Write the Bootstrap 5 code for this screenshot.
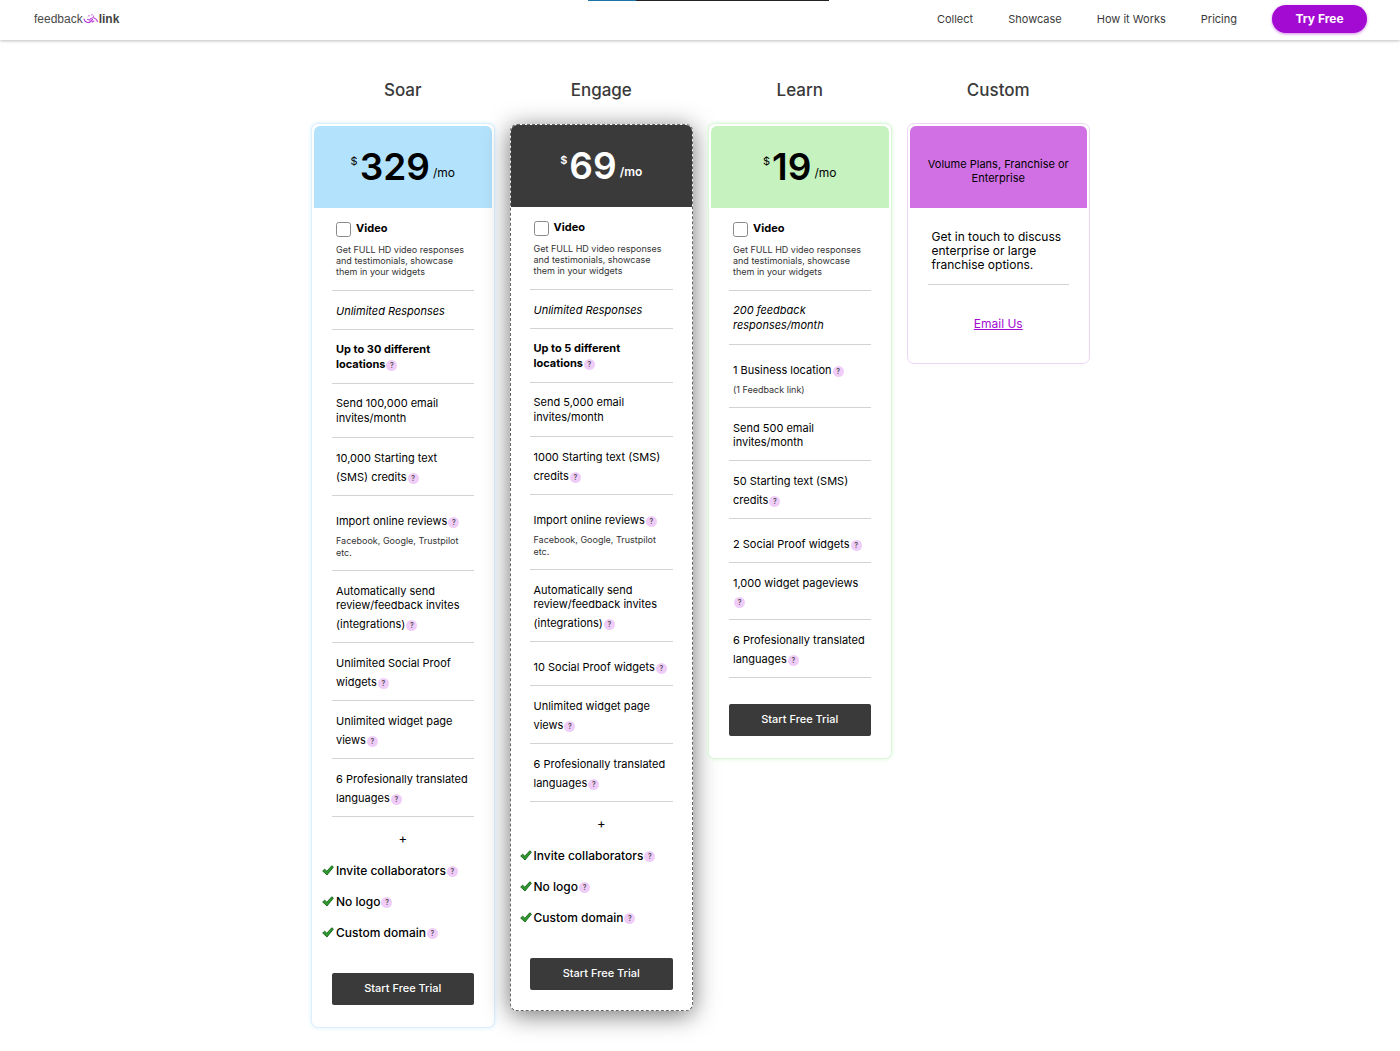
<!DOCTYPE html>
<html lang="en">
<head>
<meta charset="utf-8">
<meta name="viewport" content="width=device-width, initial-scale=1">
<title>Feedback Link - Pricing</title>
<link href="https://cdn.jsdelivr.net/npm/bootstrap@5.3.0/dist/css/bootstrap.min.css" rel="stylesheet">
<style>
  body { font-family: Inter, "Open Sans", sans-serif; font-size: 11px; line-height: 14px; color: #000; background: #fff; }
  .topbar { height: 40px; padding: 0 33px 2px 34px; background: #fff; box-shadow: 0 1px 3px rgba(0,0,0,.25); }
  .progress-strip { top: 0; left: 42%; width: 241px; height: 1px; background: #222; }
  .progress-strip span { width: 20%; height: 1px; background: #1d74a8; }
  .brand { font: 12px/16px "Liberation Sans", Arial, sans-serif; color: #4a4a4a; text-decoration: none; }
  .brand b { color: #444; }
  .top-links { gap: 35px; }
  .top-links a { color: #3a3a3a; text-decoration: none; font-size: 11px; }
  .btn-try { width: 95px; height: 28px; padding: 0; border: 0; border-radius: 14px; background: #a30ad2; color: #fff; font-size: 12px; font-weight: 700; line-height: 28px; box-shadow: 0 1px 3px rgba(163,10,210,.5); }
  .btn-try:hover { background: #8a08b3; color: #fff; }
  .plans { max-width: 780px; gap: 15px; margin: 0 auto; padding: 40px 0 20px 1px; }
  .plan { flex: 1 1 0; min-width: 0; }
  .plan h2 { font-size: 17px; line-height: 20px; font-weight: 500; color: #3a3a3a; text-align: center; margin: 0 0 23px; }
  .plan .card { padding: 2px; border-radius: 7px; --edge: #d9f0fe; border: 1px solid var(--edge); box-shadow: 0 0 4px var(--edge); }
  .plan-head { height: 82px; border-radius: 6px 6px 0 0; }
  .soar .plan-head { background: #b3e2fc; }
  .learn .card { --edge: #daf7d8; }
  .learn .plan-head { background: #c5f2bf; }
  .custom .card { --edge: #eed5f5; box-shadow: none; }
  .custom .plan-head { background: #d070e4; }
  .plan.engage .card { margin-top: 24px; padding: 0; border: 1px dashed #666; box-shadow: 0 4px 25px rgba(0,0,0,.55); }
  .plan.engage h2 { margin-bottom: 0; }
  .engage .plan-head { background: #3a3a3a; color: #fff; font-weight: 600; }
  .plan-head .amount { font-size: 37px; line-height: 40px; font-weight: 600; margin: 0 3px 0 2px; }
  .plan-head .cur { align-self: flex-start; margin-top: 7px; }
  .plan-head .per { align-self: flex-end; margin-bottom: 7px; font-size: 12px; }
  .plan-body { padding: 0 18px 20px; }
  .engage .plan-body { padding: 0 19px 20px; }
  .feat { padding: 13px 0 11px 4px; border-bottom: 1px solid #d3d3d3; white-space: nowrap; }
  .feat.roomy { padding-top: 12px; line-height: 15px; }
  .feat-video { height: 83px; }
  .feat-video label { font-size: 11px; font-weight: 700; }
  .feat-video input { width: 15px; height: 15px; margin: 1px 5px 0 0; border: 1px solid #8a8a8a; border-radius: 1px; }
  .note { font-size: 9px; line-height: 11px; color: #333; }
  .feat-video .note { margin-top: 7px; }
  .feat > .sub { margin-top: 7px; line-height: 12px; }
  .line-tip { display: flex; align-items: center; padding-top: 5px; }
  .line-tip.snug { padding-top: 0; }
  .tip { display: inline-flex; align-items: center; justify-content: center; width: 11px; height: 11px; margin: 2px 0 0 1px; padding: 0; border: 0; border-radius: 50%; background: #f0cdf9; color: #444; font-size: 7px; line-height: 11px; font-weight: 500; }
  .plus { margin: 14px 0 10px; font-size: 13px; text-align: center; }
  .extras { margin: 0 0 25px -10px; }
  .extras li { height: 31px; font-size: 12px; font-weight: 500; white-space: nowrap; }
  .extras svg { width: 12px; height: 11px; margin-right: 2px; }
  .btn-trial { height: 32px; padding: 0 0 2px; border: 0; border-radius: 2px; background: #3a3a3a; color: #fff; font-size: 11px; font-weight: 500; line-height: 14px; }
  .btn-trial:hover { background: #222; color: #fff; }
  .learn .btn-trial { margin-top: 26px; }
  .talk { padding: 22px 0 12px 4px; border-bottom: 1px solid #d3d3d3; font-size: 12px; }
  .mail { padding: 32px 0 10px; font-size: 12px; text-align: center; }
  .mail a { color: #a30ad2; }
</style>
</head>
<body>
<svg class="d-none" xmlns="http://www.w3.org/2000/svg">
  <symbol id="tick" viewBox="0 0 12 11"><path d="M.7 6 2.7 4.2 4.8 6.2 9.8.8 11.4 2.1 5 10Z" fill="#2f9a2c" stroke="#14601a" stroke-width=".9" stroke-linejoin="round"/></symbol>
</svg>

<header class="topbar d-flex align-items-center justify-content-between position-relative">
  <div class="progress-strip position-absolute"><span class="d-block"></span></div>
  <a class="brand d-flex align-items-center" href="#">feedback<svg width="16" height="12" viewBox="0 0 16 12" fill="none" stroke="#b53ad6" stroke-width="1.100" stroke-linecap="round"><path d="M1 6C2 9.500 5.500 10.500 7.500 8.500L9.500 6.500M6.500 7C8.500 3.500 12.500 4 14.600 8.500M4.500 6.500 6.500 7M9 9 11 8"/><path d="M6 2.500v.5M9 1.500v.5M10.500 3v.2"/></svg><b>link</b></a>
  <nav class="top-links d-flex align-items-center" aria-label="Main">
    <a href="#">Collect</a><a href="#">Showcase</a><a href="#">How it Works</a><a href="#">Pricing</a>
    <button type="button" class="btn btn-try">Try Free</button>
  </nav>
</header>

<main class="plans d-flex align-items-start">
  <section class="plan soar">
    <h2>Soar</h2>
    <div class="card">
      <div class="plan-head d-flex align-items-center justify-content-center"><div class="d-flex align-items-baseline"><span class="cur">$</span><span class="amount">329</span><span class="per">/mo</span></div></div>
      <div class="plan-body">
        <div class="feat feat-video">
          <div class="d-flex"><input class="form-check-input" type="checkbox" id="v1"><label for="v1">Video</label></div>
          <div class="note">Get FULL HD video responses<br>and testimonials, showcase<br>them in your widgets</div>
        </div>
        <div class="feat"><em>Unlimited Responses</em></div>
        <div class="feat roomy fw-bold">Up to 30 different<div class="line-tip snug">locations<button type="button" class="tip">?</button></div></div>
        <div class="feat roomy">Send 100,000 email<br>invites/month</div>
        <div class="feat">10,000 Starting text<div class="line-tip">(SMS) credits<button type="button" class="tip">?</button></div></div>
        <div class="feat"><div class="line-tip">Import online reviews<button type="button" class="tip">?</button></div><div class="note sub">Facebook, Google, Trustpilot<br>etc.</div></div>
        <div class="feat">Automatically send<br>review/feedback invites<div class="line-tip">(integrations)<button type="button" class="tip">?</button></div></div>
        <div class="feat">Unlimited Social Proof<div class="line-tip">widgets<button type="button" class="tip">?</button></div></div>
        <div class="feat">Unlimited widget page<div class="line-tip">views<button type="button" class="tip">?</button></div></div>
        <div class="feat">6 Profesionally translated<div class="line-tip">languages<button type="button" class="tip">?</button></div></div>
        <p class="plus">+</p>
        <ul class="extras list-unstyled">
          <li class="d-flex align-items-center"><svg><use href="#tick"/></svg>Invite collaborators<button type="button" class="tip">?</button></li>
          <li class="d-flex align-items-center"><svg><use href="#tick"/></svg>No logo<button type="button" class="tip">?</button></li>
          <li class="d-flex align-items-center"><svg><use href="#tick"/></svg>Custom domain<button type="button" class="tip">?</button></li>
        </ul>
        <button type="button" class="btn btn-trial w-100">Start Free Trial</button>
      </div>
    </div>
  </section>

  <section class="plan engage">
    <h2>Engage</h2>
    <div class="card">
      <div class="plan-head d-flex align-items-center justify-content-center"><div class="d-flex align-items-baseline"><span class="cur">$</span><span class="amount">69</span><span class="per">/mo</span></div></div>
      <div class="plan-body">
        <div class="feat feat-video">
          <div class="d-flex"><input class="form-check-input" type="checkbox" id="v2"><label for="v2">Video</label></div>
          <div class="note">Get FULL HD video responses<br>and testimonials, showcase<br>them in your widgets</div>
        </div>
        <div class="feat"><em>Unlimited Responses</em></div>
        <div class="feat roomy fw-bold">Up to 5 different<div class="line-tip snug">locations<button type="button" class="tip">?</button></div></div>
        <div class="feat roomy">Send 5,000 email<br>invites/month</div>
        <div class="feat">1000 Starting text (SMS)<div class="line-tip">credits<button type="button" class="tip">?</button></div></div>
        <div class="feat"><div class="line-tip">Import online reviews<button type="button" class="tip">?</button></div><div class="note sub">Facebook, Google, Trustpilot<br>etc.</div></div>
        <div class="feat">Automatically send<br>review/feedback invites<div class="line-tip">(integrations)<button type="button" class="tip">?</button></div></div>
        <div class="feat"><div class="line-tip">10 Social Proof widgets<button type="button" class="tip">?</button></div></div>
        <div class="feat">Unlimited widget page<div class="line-tip">views<button type="button" class="tip">?</button></div></div>
        <div class="feat">6 Profesionally translated<div class="line-tip">languages<button type="button" class="tip">?</button></div></div>
        <p class="plus">+</p>
        <ul class="extras list-unstyled">
          <li class="d-flex align-items-center"><svg><use href="#tick"/></svg>Invite collaborators<button type="button" class="tip">?</button></li>
          <li class="d-flex align-items-center"><svg><use href="#tick"/></svg>No logo<button type="button" class="tip">?</button></li>
          <li class="d-flex align-items-center"><svg><use href="#tick"/></svg>Custom domain<button type="button" class="tip">?</button></li>
        </ul>
        <button type="button" class="btn btn-trial w-100">Start Free Trial</button>
      </div>
    </div>
  </section>

  <section class="plan learn">
    <h2>Learn</h2>
    <div class="card">
      <div class="plan-head d-flex align-items-center justify-content-center"><div class="d-flex align-items-baseline"><span class="cur">$</span><span class="amount">19</span><span class="per">/mo</span></div></div>
      <div class="plan-body">
        <div class="feat feat-video">
          <div class="d-flex"><input class="form-check-input" type="checkbox" id="v3"><label for="v3">Video</label></div>
          <div class="note">Get FULL HD video responses<br>and testimonials, showcase<br>them in your widgets</div>
        </div>
        <div class="feat roomy"><em>200 feedback<br>responses/month</em></div>
        <div class="feat"><div class="line-tip">1 Business location<button type="button" class="tip">?</button></div><div class="note sub">(1 Feedback link)</div></div>
        <div class="feat">Send 500 email<br>invites/month</div>
        <div class="feat">50 Starting text (SMS)<div class="line-tip">credits<button type="button" class="tip">?</button></div></div>
        <div class="feat"><div class="line-tip">2 Social Proof widgets<button type="button" class="tip">?</button></div></div>
        <div class="feat">1,000 widget pageviews<div class="line-tip"><button type="button" class="tip">?</button></div></div>
        <div class="feat">6 Profesionally translated<div class="line-tip">languages<button type="button" class="tip">?</button></div></div>
        <button type="button" class="btn btn-trial w-100">Start Free Trial</button>
      </div>
    </div>
  </section>

  <section class="plan custom">
    <h2>Custom</h2>
    <div class="card">
      <div class="plan-head d-flex align-items-center justify-content-center text-center pt-2">Volume Plans, Franchise or<br>Enterprise</div>
      <div class="plan-body">
        <div class="talk">Get in touch to discuss<br>enterprise or large<br>franchise options.</div>
        <div class="mail"><a href="#">Email Us</a></div>
      </div>
    </div>
  </section>
</main>
<script src="https://cdn.jsdelivr.net/npm/bootstrap@5.3.0/dist/js/bootstrap.bundle.min.js"></script>
</body>
</html>
